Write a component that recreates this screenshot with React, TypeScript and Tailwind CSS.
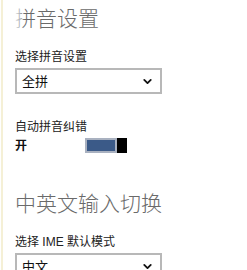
import { ChevronDown } from "lucide-react";

const FONT = "font-['Liberation_Sans','Noto_Sans_CJK_SC',sans-serif]";

function Select({ value }: { value: string }) {
  return (
    <div className="flex h-[26px] w-[147px] items-center justify-between border-2 border-[#b8b8b8] bg-white pl-[5px] pr-[6px]">
      <span className="text-[13px] leading-none text-[#111]">{value}</span>
      <ChevronDown size={13} strokeWidth={3.4} className="text-[#111]" />
    </div>
  );
}

function Toggle() {
  return (
    <div className="flex h-[15px] items-stretch">
      <div className="w-[32px] border-2 border-[#a9b1c0] bg-[#3b5a88]" />
      <div className="w-[10px] bg-black" />
    </div>
  );
}

export default function App() {
  return (
    <div className={`relative flex h-[270px] w-[247px] overflow-hidden bg-white ${FONT}`}>
      <div className="ml-[1px] w-[2px] bg-[#f5f0d6]" />
      <div className="flex flex-col pl-[12px]">
        <h2 className="pt-[8px] text-[21px] leading-[22px] font-light text-[#6a6a6a]">拼音设置</h2>
        <div className="mt-[20px] text-[12px] leading-[14px] text-[#222]">选择拼音设置</div>
        <div className="mt-[4px]">
          <Select value="全拼" />
        </div>

        <div className="mt-[26px] text-[12px] leading-[14px] text-[#222]">自动拼音纠错</div>
        <div className="mt-[4px] flex items-center">
          <span className="w-[70px] text-[12px] leading-[14px] font-bold text-[#111]">开</span>
          <Toggle />
        </div>

        <h2 className="mt-[40px] text-[21px] leading-[22px] font-light text-[#6a6a6a]">中英文输入切换</h2>
        <div className="mt-[20px] text-[12px] leading-[14px] text-[#222]">选择 IME 默认模式</div>
        <div className="mt-[4px]">
          <Select value="中文" />
        </div>
      </div>
      {/* left fade over the heading, as in the page transition */}
      <div className="pointer-events-none absolute left-[3px] top-[4px] h-[30px] w-[22px] bg-[linear-gradient(to_right,#fff_0%,#fff_50%,rgba(255,255,255,0)_100%)]" />
    </div>
  );
}
